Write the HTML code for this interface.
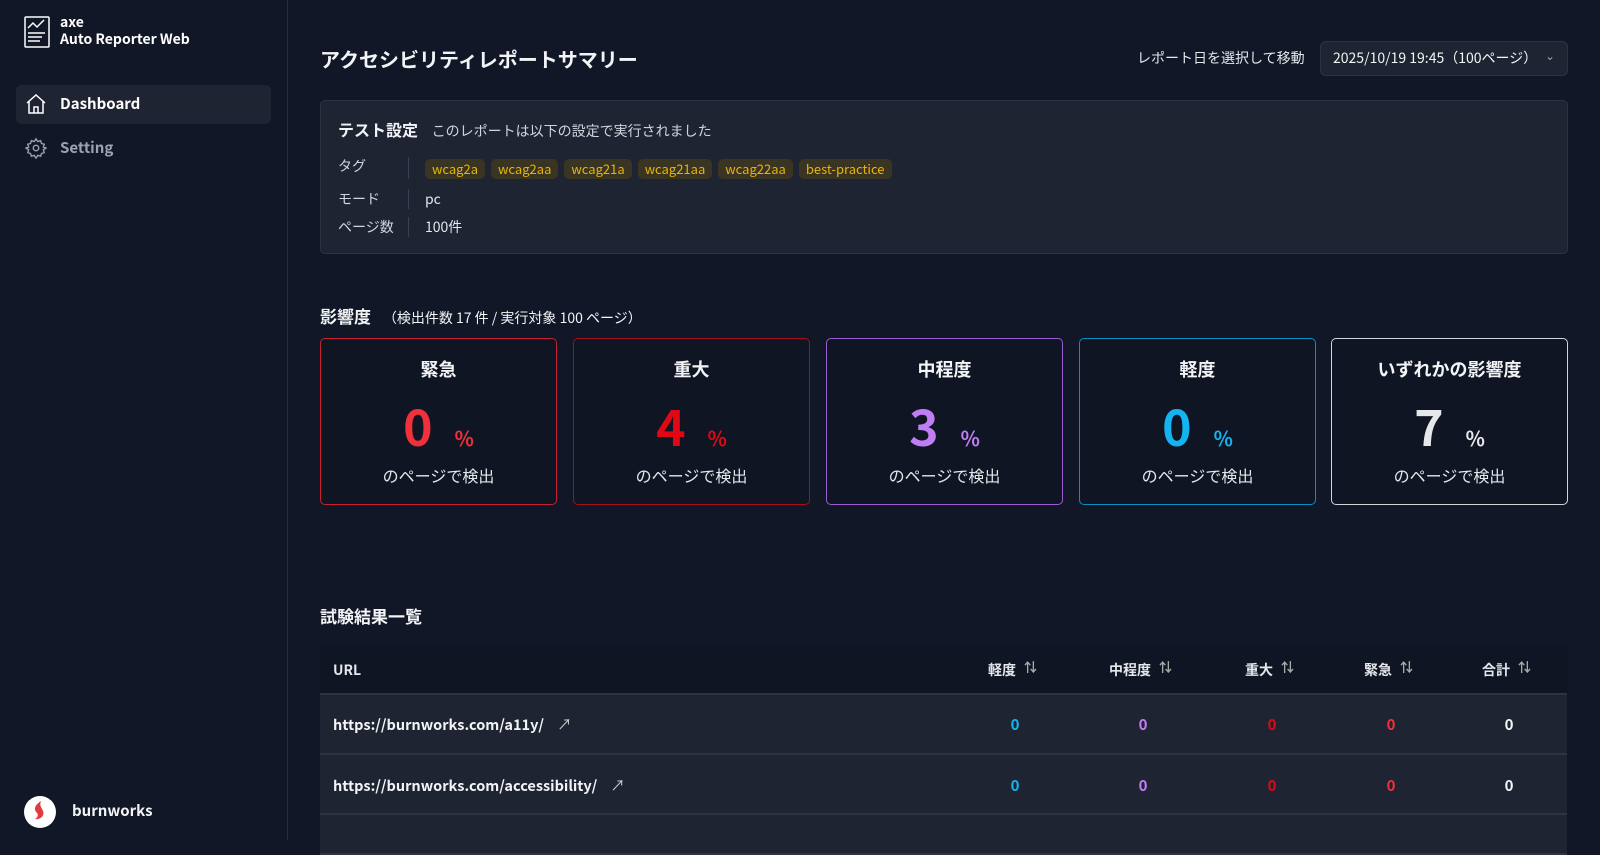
<!DOCTYPE html>
<html><head><meta charset="utf-8"><style>
*{box-sizing:border-box;margin:0;padding:0}
body{width:1600px;height:840px;overflow:hidden;background:#111726;color:#e5e7eb;font-family:"Noto Sans CJK JP","Liberation Sans",sans-serif;position:relative;line-height:1.2}
.a{position:absolute;white-space:nowrap}
.side{position:absolute;left:0;top:0;width:288px;height:840px;background:#111726;border-right:1px solid #252c3a}
.card{position:absolute;top:338px;width:237px;height:167px;border:1px solid;border-radius:5px;background:#0f1522;text-align:center}
.card .t{position:absolute;top:20px;width:100%;font-size:18px;font-weight:bold;color:#f3f4f6}
.card .n{position:absolute;top:56px;width:100%;font-size:50px;font-weight:bold}
.card .n span{font-size:20px;margin-left:22px}
.card .d{position:absolute;top:127px;width:100%;font-size:16px;color:#e5e7eb}
.tag{display:inline-block;background:#3a3522;color:#eab308;font-size:13px;padding:2px 7px;border-radius:5px;margin-right:6px}
.row{position:absolute;left:320px;width:1247px;background:#1e2432;border-bottom:2px solid #2d3441}
.v{position:absolute;font-size:15px;font-weight:bold;transform:translateX(-50%)}
.h{position:absolute;font-size:14px;font-weight:bold;color:#e5e7eb}
.h i{font-style:normal;color:#aaa;margin-left:8px;font-size:13px;position:relative;top:-3px}
</style></head><body>
<div class="side">
<svg class="a" style="left:24px;top:16px" width="26" height="32" viewBox="0 0 26 32" fill="none" stroke="#fff" stroke-width="1.5"><rect x="1" y="1" width="24" height="30" rx="1"/><path d="M4 12l5-5 4 4 7-7M4 17h17M4 21h14M4 25h12"/></svg>
<div class="a" style="left:60px;top:14px;font-size:14px;font-weight:bold;color:#fff;line-height:17px">axe<br>Auto Reporter Web</div>
<div class="a" style="left:16px;top:85px;width:255px;height:39px;background:#1e2432;border-radius:6px"></div>
<svg class="a" style="left:25px;top:93px" width="22" height="22" viewBox="0 0 22 22" fill="none" stroke="#fff" stroke-width="1.5"><path d="M2 10L11 2l9 8M4 8v12h14V8M9 20v-6h4v6"/></svg>
<div class="a" style="left:60px;top:95px;font-size:15px;font-weight:bold;color:#fff">Dashboard</div>
<svg class="a" style="left:25px;top:137px" width="22" height="22" viewBox="0 0 24 24" fill="none" stroke="#9ca3af" stroke-width="1.5"><circle cx="12" cy="12" r="3"/><path d="M12 2l2 3 3-1 1 3 3 1-1 3 3 1-3 2 1 3-3 1-1 3-3-1-2 3-2-3-3 1-1-3-3-1 1-3-3-2 3-1-1-3 3-1 1-3 3 1z"/></svg>
<div class="a" style="left:60px;top:139px;font-size:15px;color:#9ca3af;font-weight:bold">Setting</div>
<div class="a" style="left:24px;top:796px;width:32px;height:32px;border-radius:50%;background:#fff"></div>
<svg class="a" style="left:24px;top:796px" width="32" height="32" viewBox="0 0 32 32"><path d="M17 5c-6 4-8 8-4 12 2 2 0 5-2 6 5 1 10-3 8-8-1-3-4-5-2-10z" fill="#e23b3b"/></svg>
<div class="a" style="left:72px;top:802px;font-size:15px;font-weight:bold;color:#f3f4f6">burnworks</div>
</div>

<div class="a" style="left:320px;top:47px;font-size:20px;font-weight:bold;color:#f3f4f6">アクセシビリティレポートサマリー</div>
<div class="a" style="left:1137px;top:50px;font-size:14px;color:#e5e7eb">レポート日を選択して移動</div>
<div class="a" style="left:1320px;top:41px;width:248px;height:35px;border:1px solid #2d3441;border-radius:6px;background:#1e2432;font-size:14px;padding:8px 12px;color:#f3f4f6">2025/10/19 19:45（100ページ）<span style="position:absolute;right:12px;top:7px;color:#9ca3af;font-size:12px">⌄</span></div>

<div class="a" style="left:320px;top:100px;width:1248px;height:154px;border:1px solid #2d3441;border-radius:5px;background:#1e2432"></div>
<div class="a" style="left:338px;top:120px;font-size:16px;font-weight:bold;color:#f3f4f6">テスト設定 <span style="font-weight:normal;font-size:14px;color:#d1d5db;margin-left:10px">このレポートは以下の設定で実行されました</span></div>
<div class="a" style="left:338px;top:158px;font-size:14px;color:#d1d5db">タグ</div>
<div class="a" style="left:408px;top:157px;width:1px;height:22px;background:#3a4150"></div>
<div class="a" style="left:425px;top:158px"><span class="tag">wcag2a</span><span class="tag">wcag2aa</span><span class="tag">wcag21a</span><span class="tag">wcag21aa</span><span class="tag">wcag22aa</span><span class="tag">best-practice</span></div>
<div class="a" style="left:338px;top:191px;font-size:14px;color:#d1d5db">モード</div>
<div class="a" style="left:408px;top:189px;width:1px;height:20px;background:#3a4150"></div>
<div class="a" style="left:425px;top:191px;font-size:14px;color:#e5e7eb">pc</div>
<div class="a" style="left:338px;top:219px;font-size:14px;color:#d1d5db">ページ数</div>
<div class="a" style="left:408px;top:217px;width:1px;height:20px;background:#3a4150"></div>
<div class="a" style="left:425px;top:219px;font-size:14px;color:#e5e7eb">100件</div>

<div class="a" style="left:320px;top:306px;font-size:17px;font-weight:bold;color:#f3f4f6">影響度 <span style="font-weight:normal;font-size:14px;margin-left:8px">（検出件数 17 件 / 実行対象 100 ページ）</span></div>

<div class="card" style="left:320px;border-color:#c8202c"><div class="t">緊急</div><div class="n" style="color:#f0303a">0<span>%</span></div><div class="d">のページで検出</div></div>
<div class="card" style="left:573px;border-color:#a3101a"><div class="t">重大</div><div class="n" style="color:#e00814">4<span>%</span></div><div class="d">のページで検出</div></div>
<div class="card" style="left:826px;border-color:#9b5cd6"><div class="t">中程度</div><div class="n" style="color:#c07ef5">3<span>%</span></div><div class="d">のページで検出</div></div>
<div class="card" style="left:1079px;border-color:#0c8fc0"><div class="t">軽度</div><div class="n" style="color:#13b4f0">0<span>%</span></div><div class="d">のページで検出</div></div>
<div class="card" style="left:1331px;border-color:#d1d5db"><div class="t">いずれかの影響度</div><div class="n" style="color:#e5e7eb">7<span>%</span></div><div class="d">のページで検出</div></div>

<div class="a" style="left:320px;top:606px;font-size:17px;font-weight:bold;color:#f3f4f6">試験結果一覧</div>
<div class="a" style="left:320px;top:646px;width:1247px;height:49px;background:#0f1522;border-bottom:2px solid #2d3441"></div>
<div class="h" style="left:333px;top:662px">URL</div>
<div class="h" style="left:988px;top:662px">軽度<i>⇅</i></div>
<div class="h" style="left:1109px;top:662px">中程度<i>⇅</i></div>
<div class="h" style="left:1245px;top:662px">重大<i>⇅</i></div>
<div class="h" style="left:1364px;top:662px">緊急<i>⇅</i></div>
<div class="h" style="left:1482px;top:662px">合計<i>⇅</i></div>

<div class="row" style="top:695px;height:60px"></div>
<div class="row" style="top:755px;height:60px"></div>
<div class="row" style="top:815px;height:40px"></div>
<div class="a" style="left:333px;top:716px;font-size:14.5px;font-weight:bold;color:#f3f4f6">https://burnworks.com/a11y/ <span style="font-weight:normal;margin-left:10px;color:#ccc">↗</span></div>
<div class="a" style="left:333px;top:777px;font-size:14.5px;font-weight:bold;color:#f3f4f6">https://burnworks.com/accessibility/ <span style="font-weight:normal;margin-left:10px;color:#ccc">↗</span></div>
<div class="v" style="left:1015px;top:716px;color:#13b4f0">0</div><div class="v" style="left:1143px;top:716px;color:#c07ef5">0</div><div class="v" style="left:1272px;top:716px;color:#e00814">0</div><div class="v" style="left:1391px;top:716px;color:#f0303a">0</div><div class="v" style="left:1509px;top:716px;color:#f3f4f6">0</div>
<div class="v" style="left:1015px;top:777px;color:#13b4f0">0</div><div class="v" style="left:1143px;top:777px;color:#c07ef5">0</div><div class="v" style="left:1272px;top:777px;color:#e00814">0</div><div class="v" style="left:1391px;top:777px;color:#f0303a">0</div><div class="v" style="left:1509px;top:777px;color:#f3f4f6">0</div>
</body></html>
